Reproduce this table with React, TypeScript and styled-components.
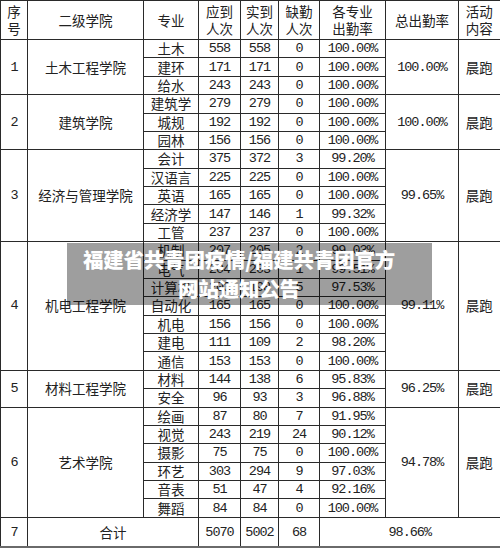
import React from "react";
import styled, { createGlobalStyle } from "styled-components";

type Row = [string, string, string, string, string];

interface Group {
  no: string;
  college: string;
  total: string;
  activity: string;
  rows: Row[];
}

const groups: Group[] = [
  {
    no: "1",
    college: "土木工程学院",
    total: "100.00%",
    activity: "晨跑",
    rows: [
      ["土木", "558", "558", "0", "100.00%"],
      ["建环", "171", "171", "0", "100.00%"],
      ["给水", "243", "243", "0", "100.00%"],
    ],
  },
  {
    no: "2",
    college: "建筑学院",
    total: "100.00%",
    activity: "晨跑",
    rows: [
      ["建筑学", "279", "279", "0", "100.00%"],
      ["城规", "192", "192", "0", "100.00%"],
      ["园林", "156", "156", "0", "100.00%"],
    ],
  },
  {
    no: "3",
    college: "经济与管理学院",
    total: "99.65%",
    activity: "晨跑",
    rows: [
      ["会计", "375", "372", "3", "99.20%"],
      ["汉语言", "225", "225", "0", "100.00%"],
      ["英语", "165", "165", "0", "100.00%"],
      ["经济学", "147", "146", "1", "99.32%"],
      ["工管", "237", "237", "0", "100.00%"],
    ],
  },
  {
    no: "4",
    college: "机电工程学院",
    total: "99.11%",
    activity: "晨跑",
    rows: [
      ["机制", "207", "205", "2", "99.03%"],
      ["电气", "204", "203", "1", "99.51%"],
      ["计算机", "203", "198", "5", "97.53%"],
      ["自动化", "165", "165", "0", "100.00%"],
      ["机电", "156", "156", "0", "100.00%"],
      ["建电", "111", "109", "2", "98.20%"],
      ["通信", "153", "153", "0", "100.00%"],
    ],
  },
  {
    no: "5",
    college: "材料工程学院",
    total: "96.25%",
    activity: "晨跑",
    rows: [
      ["材料", "144", "138", "6", "95.83%"],
      ["安全", "96", "93", "3", "96.88%"],
    ],
  },
  {
    no: "6",
    college: "艺术学院",
    total: "94.78%",
    activity: "晨跑",
    rows: [
      ["绘画", "87", "80", "7", "91.95%"],
      ["视觉", "243", "219", "24", "90.12%"],
      ["摄影", "75", "75", "0", "100.00%"],
      ["环艺", "303", "294", "9", "97.03%"],
      ["音表", "51", "47", "4", "92.16%"],
      ["舞蹈", "84", "84", "0", "100.00%"],
    ],
  },
];

const colWidths = [27, 116, 55, 42, 38, 41, 66, 73, 42];

export default function App() {
  return (
    <>
      <GlobalStyle />
      <Page>
        <Sheet>
          <colgroup>
            {colWidths.map((w, i) => (
              <col key={i} style={{ width: w }} />
            ))}
          </colgroup>
          <thead>
            <HeadRow>
              <HeadCell>序<br />号</HeadCell>
              <HeadCell>二级学院</HeadCell>
              <HeadCell>专业</HeadCell>
              <HeadCell>应到<br />人次</HeadCell>
              <HeadCell>实到<br />人次</HeadCell>
              <HeadCell>缺勤<br />人次</HeadCell>
              <HeadCell>各专业<br />出勤率</HeadCell>
              <HeadCell>总出勤率</HeadCell>
              <HeadCell>活动<br />内容</HeadCell>
            </HeadRow>
          </thead>
          <tbody>
            {groups.map((g) =>
              g.rows.map((r, i) => (
                <DataRow key={g.no + r[0]}>
                  {i === 0 && (
                    <>
                      <Cell $mono rowSpan={g.rows.length}>{g.no}</Cell>
                      <Cell rowSpan={g.rows.length}>{g.college}</Cell>
                    </>
                  )}
                  <Cell>{r[0]}</Cell>
                  <Cell $mono>{r[1]}</Cell>
                  <Cell $mono>{r[2]}</Cell>
                  <Cell $mono>{r[3]}</Cell>
                  <Cell $mono>{r[4]}</Cell>
                  {i === 0 && (
                    <>
                      <Cell $mono rowSpan={g.rows.length}>{g.total}</Cell>
                      <Cell rowSpan={g.rows.length}>{g.activity}</Cell>
                    </>
                  )}
                </DataRow>
              ))
            )}
            <TotalRow>
              <Cell $mono>7</Cell>
              <Cell colSpan={2}>合计</Cell>
              <Cell $mono>5070</Cell>
              <Cell $mono>5002</Cell>
              <Cell $mono>68</Cell>
              <Cell $mono colSpan={3}>98.66%</Cell>
            </TotalRow>
          </tbody>
        </Sheet>
        <Banner>
          <BannerLine>福建省共青团疫情/福建共青团官方</BannerLine>
          <BannerLine>网站通知公告</BannerLine>
        </Banner>
      </Page>
    </>
  );
}

const GlobalStyle = createGlobalStyle`
  html, body {
    margin: 0;
    padding: 0;
    background: #fff;
  }
  body {
    font-family: "Noto Sans CJK SC", sans-serif;
    color: #1e1e1e;
  }
`;

const Page = styled.div`
  position: relative;
  width: 500px;
  height: 549px;
  overflow: hidden;
  background: #fff;
`;

const Sheet = styled.table`
  width: 500px;
  table-layout: fixed;
  border-collapse: collapse;
  border-right: 2px solid #6a6a6a;
  border-bottom: 2px solid #6a6a6a;
`;

const HeadRow = styled.tr`
  height: 39px;
`;

const DataRow = styled.tr`
  height: 18.38px;
`;

const TotalRow = styled.tr`
  height: 30px;
`;

const HeadCell = styled.th`
  border: 1px solid #2a2a2a;
  padding: 0;
  font-weight: 400;
  font-family: "Noto Sans CJK SC", sans-serif;
  font-size: 13.5px;
  line-height: 17px;
  text-align: center;
  vertical-align: middle;
  color: #222;
`;

const Cell = styled.td<{ $mono?: boolean }>`
  border: 1px solid #2a2a2a;
  padding: 0;
  text-align: center;
  vertical-align: middle;
  white-space: nowrap;
  line-height: 17px;
  color: #222;
  font-family: ${(p) =>
    p.$mono ? '"Liberation Mono", monospace' : '"Noto Sans CJK SC", sans-serif'};
  font-size: 13.5px;
  letter-spacing: ${(p) => (p.$mono ? "-1px" : "0")};
`;

const Banner = styled.div`
  position: absolute;
  left: 67px;
  top: 243px;
  width: 365px;
  height: 62px;
  box-sizing: border-box;
  padding: 2px 32px 0 11px;
  background: rgba(0, 0, 0, 0.38);
  text-align: center;
`;

const BannerLine = styled.div`
  white-space: nowrap;
  color: #fff;
  font-family: "Noto Sans CJK SC", sans-serif;
  font-weight: 900;
  font-size: 20.5px;
  line-height: 29px;
  letter-spacing: -0.2px;
`;
